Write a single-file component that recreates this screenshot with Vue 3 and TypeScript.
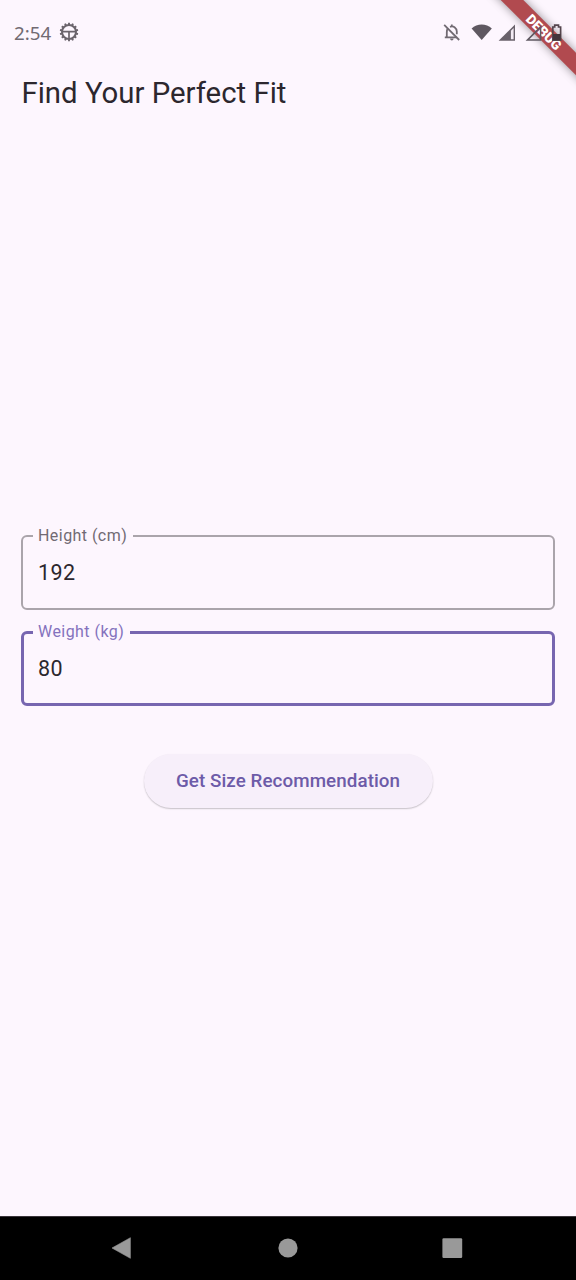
<script setup lang="ts">
import { ref } from 'vue'

interface Field {
  id: string
  label: string
  value: string
}

const fields = ref<Field[]>([
  { id: 'height', label: 'Height (cm)', value: '192' },
  { id: 'weight', label: 'Weight (kg)', value: '80' },
])
const active = ref('weight')
const teeth = Array.from({ length: 14 }, (_, i) => (i * 360) / 14)
</script>

<template>
  <div class="screen">
    <header class="status">
      <span class="time">2:54</span>
      <svg class="gear" width="20" height="20" viewBox="0 0 20 20">
        <g fill="none" stroke="#6b646c">
          <circle cx="10" cy="10" r="7" stroke-width="2" />
          <path d="M3.5 9.6H16.5M10 9.6V16.5" stroke-width="1.7" />
          <path
            v-for="t in teeth"
            :key="t"
            d="M10 .8V3"
            stroke-width="1.9"
            :transform="`rotate(${t} 10 10)`"
          />
        </g>
      </svg>
      <svg class="tray" width="126" height="24" viewBox="0 0 126 24">
        <g fill="none" stroke="#716a72" stroke-width="1.8">
          <path d="M7.8 8.2C6.8 9.6 6.8 10.8 6.8 12.6V17M10 6.8C13.8 5.6 16.8 8 16.8 11.6V14.3M4.8 17.4H16.5M11.8 6.4V4.4" />
          <path d="M4.2 4.8L19.2 20" />
        </g>
        <path d="M10 18.5H13.6Q13.4 20.6 11.8 20.6T10 18.5Z" fill="#716a72" />
        <path d="M31.6 8.6C37 3.2 46.4 3.2 51.8 8.6L41.7 20Z" fill="#5f5861" />
        <path d="M58.6 20.8L75 4.4V20.8Z" fill="#68616a" />
        <path d="M70.9 10.8L73.6 8.1V19.3H70.9Z" fill="#f3ebf4" />
        <path d="M87.4 20.1L100.6 6.9V20.1Z" fill="none" stroke="#5f5861" stroke-width="1.5" />
        <path d="M112.8 7H114.7V5.2H118.5V7H120.6V20.2H112.8Z" fill="none" stroke="#54454d" stroke-width="1.7" />
        <path d="M113 14H120.5V20H113Z" fill="#43343b" />
      </svg>
    </header>
    <h1 class="title">Find Your Perfect Fit</h1>

    <main class="form">
      <fieldset
        v-for="f in fields"
        :key="f.id"
        class="field"
        :class="{ focused: active === f.id }"
      >
        <legend>{{ f.label }}</legend>
        <input v-model="f.value" :aria-label="f.label" @focus="active = f.id" />
      </fieldset>
      <button class="submit" type="button">Get Size Recommendation</button>
    </main>

    <nav class="navbar">
      <svg width="576" height="64" viewBox="0 0 576 64">
        <path d="M0 .5H576" stroke="#39343a" />
        <g fill="#999">
          <path d="M112 32L130.4 21.7V42.3Z" stroke="#999" stroke-width=".6" stroke-linejoin="round" />
          <circle cx="288" cy="32" r="9.6" />
          <rect x="442.4" y="22.2" width="19.8" height="19.8" rx="1.2" />
        </g>
      </svg>
    </nav>

    <div class="corner"><div class="ribbon">DEBUG</div></div>
  </div>
</template>

<style>
body {
  margin: 0;
  background: #fdf6fe;
}
</style>

<style scoped>
.screen {
  position: relative;
  display: flex;
  flex-direction: column;
  width: 576px;
  height: 1280px;
  overflow: hidden;
  background: #fdf6fe;
  color: #2c272e;
  font-family: Roboto, sans-serif;
}
.status {
  position: relative;
  z-index: 2;
  display: flex;
  align-items: center;
  height: 64px;
  padding: 0 10px 0 14px;
}
.time {
  width: 45px;
  padding-top: 2px;
  font: 18.8px/24px 'Noto Sans', sans-serif;
  color: #716a72;
}
.tray {
  margin-left: auto;
}
.title {
  margin: 9px 0 0 21.5px;
  font-size: 29.35px;
  font-weight: 400;
  line-height: 40px;
  white-space: nowrap;
}
.form {
  display: flex;
  flex: 1;
  flex-direction: column;
  padding: 414px 21px 0;
}
.field {
  box-sizing: border-box;
  height: 83px;
  min-width: 0;
  margin: 0 0 13px;
  padding: 0 15px;
  border: 2px solid #aaa4ab;
  border-radius: 6px;
}
.field legend {
  height: 18px;
  margin-left: -5px;
  padding: 0 6px 0 5px;
  font-size: 16px;
  line-height: 18px;
  letter-spacing: 0.45px;
  color: #716a73;
}
.field input {
  display: block;
  width: 100%;
  height: 30px;
  margin-top: 12px;
  padding: 0;
  border: 0;
  outline: 0;
  background: transparent;
  color: #2c272e;
  font: 21.5px Roboto, sans-serif;
  letter-spacing: 0.4px;
}
.field.focused {
  padding: 0 14px;
  border: 3px solid #7766b0;
}
.field.focused legend {
  color: #8472bd;
}
.submit {
  align-self: center;
  width: 289px;
  height: 54px;
  margin-top: 35px;
  padding: 0;
  border: 0;
  border-radius: 27px;
  background: #f7effa;
  box-shadow: 0 1px 1.5px rgba(0, 0, 0, 0.22);
  color: #6d5ba8;
  font: 500 18.8px Roboto, sans-serif;
  letter-spacing: 0.08px;
  white-space: nowrap;
}
.navbar {
  height: 64px;
  background: #000;
}
.navbar svg {
  display: block;
}
.corner {
  position: absolute;
  top: 0;
  right: 0;
  width: 110px;
  height: 110px;
  overflow: hidden;
  pointer-events: none;
}
.ribbon {
  position: absolute;
  top: 23.5px;
  left: 8px;
  width: 140px;
  height: 16px;
  transform: rotate(45deg);
  background: #b14a4f;
  box-shadow: 0 0 10px rgba(0, 0, 0, 0.42);
  color: #fff;
  font-size: 13.7px;
  font-weight: 900;
  line-height: 16px;
  text-align: center;
}
</style>
